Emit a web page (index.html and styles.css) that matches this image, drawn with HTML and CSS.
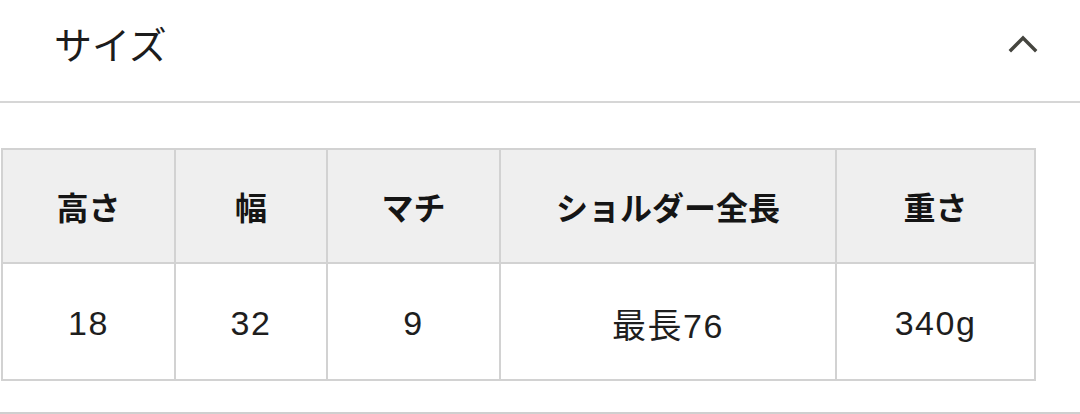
FILE: index.html
```html
<!DOCTYPE html>
<html lang="ja">
<head>
<meta charset="utf-8">
<link rel="stylesheet" href="styles.css">
</head>
<body>
<section class="accordion">
  <header class="acc-head">
    <h2 class="acc-title">サイズ</h2>
    <svg class="chevron" width="30" height="20" viewBox="0 0 30 20"><polyline points="3,17 15,5 27,17" fill="none" stroke="#45453f" stroke-width="3.4" stroke-linecap="square"/></svg>
  </header>
  <div class="acc-body">
    <div class="size-table">
      <div class="cell th">高さ</div>
      <div class="cell th">幅</div>
      <div class="cell th">マチ</div>
      <div class="cell th">ショルダー全長</div>
      <div class="cell th">重さ</div>
      <div class="cell td">18</div>
      <div class="cell td">32</div>
      <div class="cell td">9</div>
      <div class="cell td">最長76</div>
      <div class="cell td">340g</div>
    </div>
  </div>
</section>
</body>
</html>
```
FILE: styles.css
```css
html, body {
  margin: 0;
  padding: 0;
  background: #fff;
}
body {
  width: 1080px;
  height: 414px;
  overflow: hidden;
  font-family: "Noto Sans CJK JP", "Noto Sans", sans-serif;
  color: #1a1a1a;
}
.accordion {
  border-bottom: 2px solid #cfcfcf;
  height: 412px;
}
.acc-head {
  height: 101px;
  border-bottom: 2px solid #d6d6d6;
  display: flex;
  align-items: center;
  justify-content: space-between;
  padding: 0 42px 0 54px;
}
.acc-title {
  margin: 0 0 16px 0;
  font-size: 38px;
  font-weight: 400;
  color: #1c1c1c;
}
.chevron {
  margin-bottom: 16px;
}
.acc-body {
  padding: 45px 0 0 1px;
}
.size-table {
  display: grid;
  grid-template-columns: 171px 150px 171px 334px 197px;
  grid-template-rows: 112px 115px;
  gap: 2px;
  padding: 2px;
  background: #d2d2d2;
  width: max-content;
}
.cell {
  display: flex;
  align-items: center;
  justify-content: center;
}
.th {
  background: #efefef;
  font-size: 32px;
  font-weight: 700;
  color: #151515;
}
.td {
  background: #fff;
  font-family: "Liberation Sans", "Noto Sans CJK JP", sans-serif;
  font-size: 34px;
  font-weight: 400;
  color: #1e1e1e;
  letter-spacing: 1.5px;
  padding-top: 4px;
}
```
